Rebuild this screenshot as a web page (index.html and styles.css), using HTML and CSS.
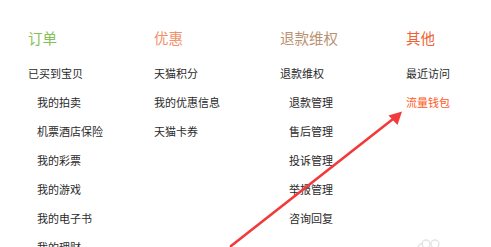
FILE: index.html
```html
<!DOCTYPE html>
<html lang="zh-CN">
<head>
<meta charset="utf-8">
<title>菜单</title>
<link rel="stylesheet" href="styles.css">
</head>
<body>
<div class="page">
  <div class="menu">
    <section class="col">
      <h2 class="head head-green">订单</h2>
      <ul class="list">
        <li class="item">已买到宝贝</li>
        <li class="item sub">我的拍卖</li>
        <li class="item sub">机票酒店保险</li>
        <li class="item sub">我的彩票</li>
        <li class="item sub">我的游戏</li>
        <li class="item sub">我的电子书</li>
        <li class="item sub">我的理财</li>
      </ul>
    </section>
    <section class="col">
      <h2 class="head head-salmon">优惠</h2>
      <ul class="list">
        <li class="item">天猫积分</li>
        <li class="item">我的优惠信息</li>
        <li class="item">天猫卡券</li>
      </ul>
    </section>
    <section class="col">
      <h2 class="head head-tan">退款维权</h2>
      <ul class="list">
        <li class="item">退款维权</li>
        <li class="item sub">退款管理</li>
        <li class="item sub">售后管理</li>
        <li class="item sub">投诉管理</li>
        <li class="item sub">举报管理</li>
        <li class="item sub">咨询回复</li>
      </ul>
    </section>
    <section class="col">
      <h2 class="head head-orange">其他</h2>
      <ul class="list">
        <li class="item">最近访问</li>
        <li class="item item-hot">流量钱包</li>
      </ul>
    </section>
  </div>
  <svg class="overlay" width="491" height="247" viewBox="0 0 491 247" aria-hidden="true">
    <line x1="231" y1="246" x2="393" y2="119" stroke="#f23a3a" stroke-width="2.6" stroke-linecap="round"/>
    <polygon points="402,111.5 388.5,115.5 397.5,125" fill="#f23a3a"/>
    <g fill="none" stroke="#e4e4e4" stroke-width="1.4">
      <circle cx="426" cy="244" r="4"/>
      <circle cx="435" cy="244" r="4"/>
      <path d="M418 247 q2 -4 5 -3"/>
    </g>
  </svg>
</div>
</body>
</html>
```
FILE: styles.css
```css
html, body {
  margin: 0;
  padding: 0;
  background: #ffffff;
}
body {
  font-family: "Noto Sans CJK SC", "Noto Sans", sans-serif;
  color: #2a2a2a;
}
.page {
  position: relative;
  width: 491px;
  height: 247px;
  overflow: hidden;
}
.menu {
  display: grid;
  grid-template-columns: repeat(4, 126px);
  padding: 28px 0 0 28px;
}
.head {
  margin: 0 0 11px 0;
  font-size: 14.5px;
  font-weight: normal;
  line-height: 20px;
}
.head-green { color: #86c05a; }
.head-salmon { color: #f1906a; }
.head-tan { color: #b99272; }
.head-orange { color: #ef6333; }
.list {
  list-style: none;
  margin: 0;
  padding: 0;
}
.item {
  font-size: 11px;
  line-height: 29px;
  height: 29px;
  white-space: nowrap;
}
.sub {
  padding-left: 9px;
}
.item-hot {
  color: #ff5a1e;
}
.overlay {
  position: absolute;
  left: 0;
  top: 0;
  pointer-events: none;
}
```
